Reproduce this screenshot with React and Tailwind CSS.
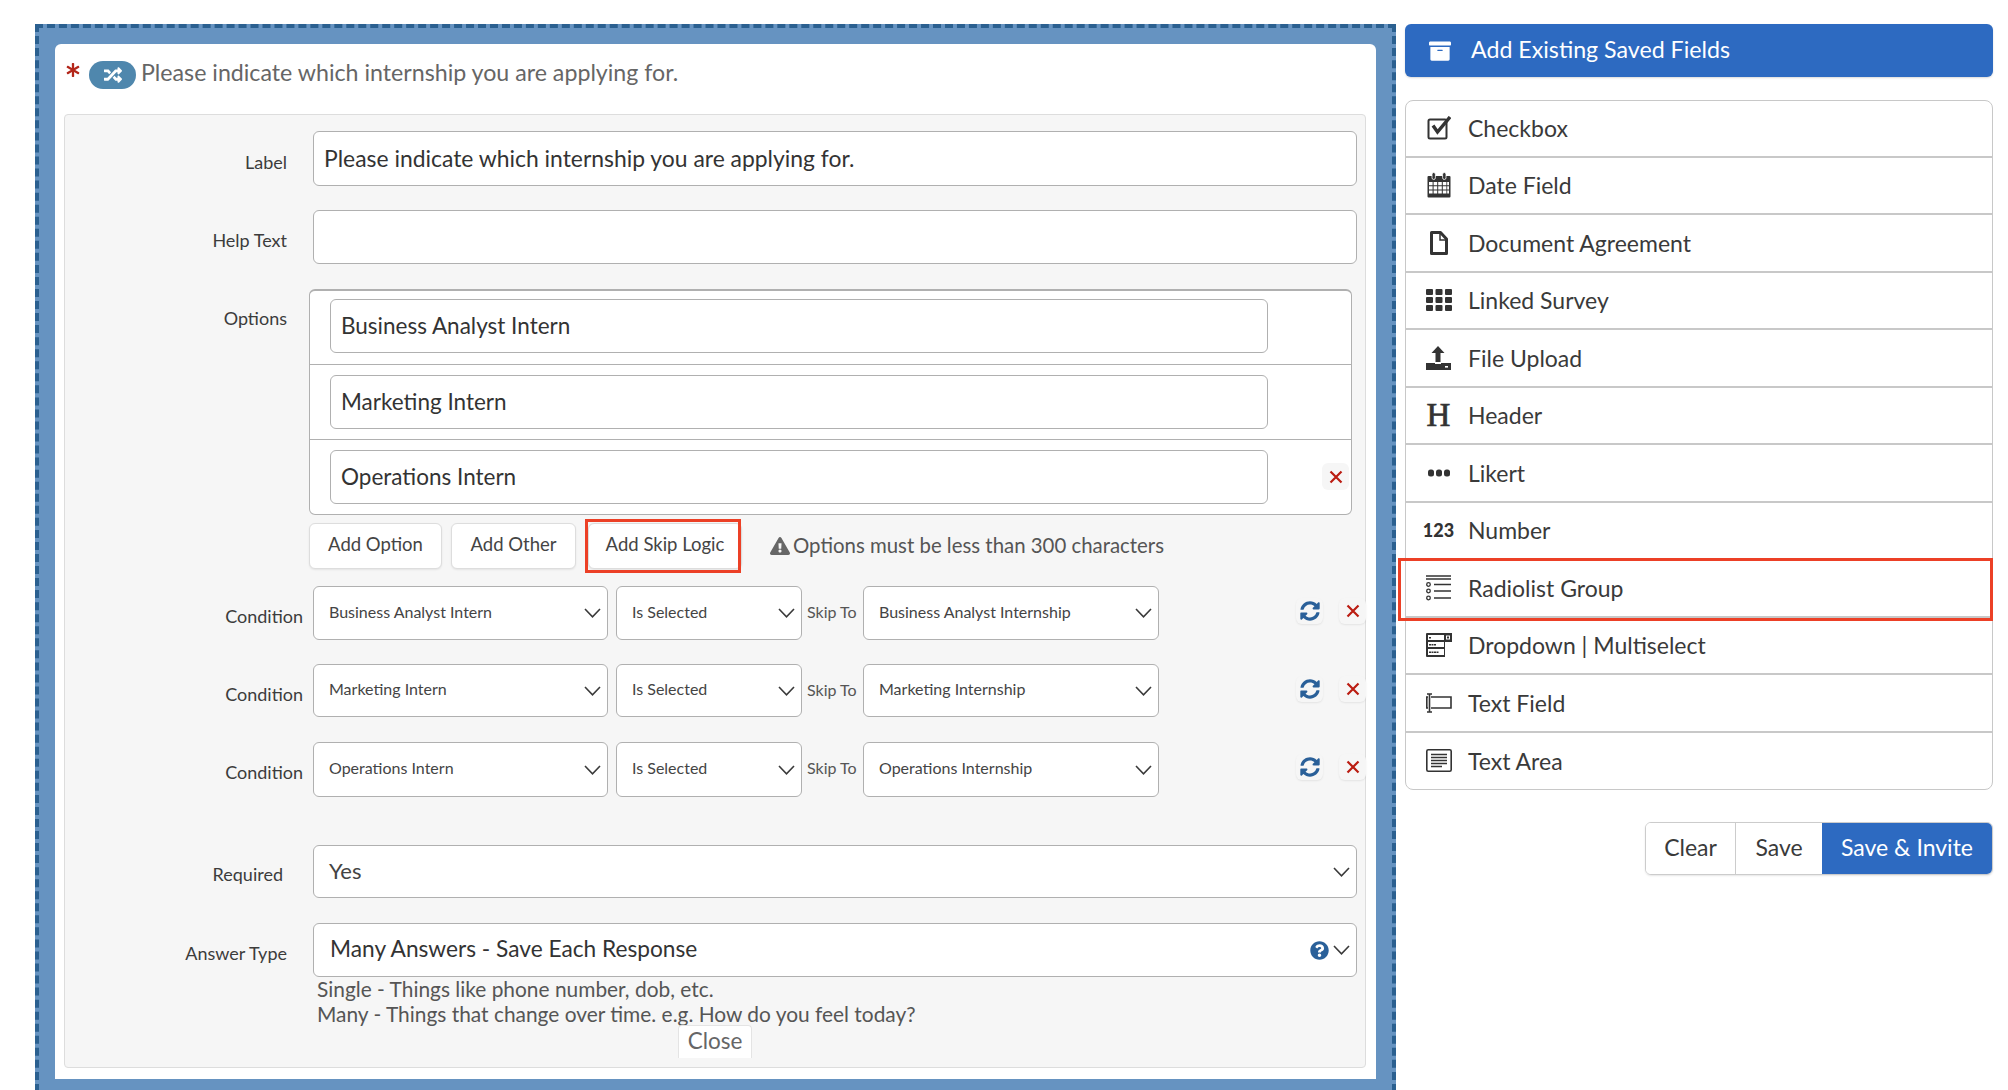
import React from "react";
import { FaRandom, FaAsterisk, FaSyncAlt, FaQuestionCircle, FaExclamationTriangle, FaArchive } from "react-icons/fa";

const font = "font-['Lato','Liberation_Sans',sans-serif]";

const Chevron = () => (
  <svg width="17" height="10" viewBox="0 0 17 10" className="shrink-0" fill="none" stroke="#3a3a3a" strokeWidth="1.6">
    <polyline points="1,1 8.5,8.8 16,1" />
  </svg>
);

const Cross = ({ size = 14 }) => (
  <svg width={size} height={size} viewBox="0 0 14 14" stroke="#bb1d12" strokeWidth="2.2" fill="none">
    <path d="M1.5 1.5 12.5 12.5M12.5 1.5 1.5 12.5" />
  </svg>
);

const Select = ({ value, className, textClass = "text-[16px]" }) => (
  <div className={`flex items-center justify-between rounded-md border border-[#b0b0b0] bg-white pl-[15px] pr-[6px] text-[#444] ${className}`}>
    <span className={`pb-[3px] ${textClass}`}>{value}</span>
    <Chevron />
  </div>
);

const FieldLabel = ({ children, className }) => (
  <div className={`shrink-0 text-right text-[18px] leading-6 text-[#3c3c3c] ${className}`}>{children}</div>
);

const CheckboxIcon = () => (
  <svg width="24" height="24" viewBox="0 0 24 24" fill="none" stroke="#333">
    <rect x="1.5" y="3.5" width="18" height="19" rx="1.5" strokeWidth="2" />
    <path d="M6 9.5 10.5 16 23 1" strokeWidth="3.4" />
  </svg>
);

const CalendarIcon = () => (
  <svg width="24" height="26" viewBox="0 0 24 26" fill="#333">
    <path d="M1.5 4h21a1 1 0 0 1 1 1v19.5a1 1 0 0 1-1 1h-21a1 1 0 0 1-1-1V5a1 1 0 0 1 1-1Z" />
    <rect x="5" y="0.5" width="3.4" height="7" rx="1.7" stroke="#fff" strokeWidth="0.8" />
    <rect x="15.6" y="0.5" width="3.4" height="7" rx="1.7" stroke="#fff" strokeWidth="0.8" />
    <path fill="#fff" d="M2 10h3.6v3.2H2zM6.6 10h3.6v3.2H6.6zM11.2 10h3.6v3.2h-3.6zM15.8 10h3.6v3.2h-3.6zM20.2 10H22v3.2h-1.8zM2 14.2h3.6v3.2H2zM6.6 14.2h3.6v3.2H6.6zM11.2 14.2h3.6v3.2h-3.6zM15.8 14.2h3.6v3.2h-3.6zM20.2 14.2H22v3.2h-1.8zM2 18.4h3.6v3.2H2zM6.6 18.4h3.6v3.2H6.6zM11.2 18.4h3.6v3.2h-3.6zM15.8 18.4h3.6v3.2h-3.6zM20.2 18.4H22v3.2h-1.8z" />
  </svg>
);

const FileIcon = () => (
  <svg width="18" height="24" viewBox="0 0 18 24" fill="none" stroke="#333" strokeWidth="3">
    <path d="M1.5 1.5h9l6 6.5v14.5h-15Z" strokeLinejoin="round" />
    <path d="M10 2v7h6.5" strokeWidth="1.5" />
  </svg>
);

const GridIcon = () => (
  <svg width="26" height="22" viewBox="0 0 26 22" fill="#333">
    {[0, 8, 16].map(y =>
      [0, 9.5, 19].map(x => <rect key={`${x}-${y}`} x={x} y={y} width="7" height="6" rx="1" />)
    )}
  </svg>
);

const UploadIcon = () => (
  <svg width="25" height="24" viewBox="0 0 25 24" fill="#333">
    <path d="M12 0 18.5 7H14.5V16H9.5V7H5.5Z" />
    <path d="M0 17h9v1h6v-1h10v7H0Z" />
    <rect x="19" y="20" width="3" height="1.6" fill="#fff" />
  </svg>
);

const DotsIcon = () => (
  <svg width="22" height="8" viewBox="0 0 22 8" fill="#333">
    <rect x="0" y="0.5" width="6" height="7" rx="2.5" />
    <rect x="8" y="0.5" width="6" height="7" rx="2.5" />
    <rect x="16" y="0.5" width="6" height="7" rx="2.5" />
  </svg>
);

const RadioListIcon = () => (
  <svg width="26" height="26" viewBox="0 0 26 26" fill="none" stroke="#333" strokeWidth="1.3">
    <path d="M0 1h25M0 4h25" />
    <circle cx="2.5" cy="9.5" r="1.8" />
    <circle cx="2.5" cy="16" r="1.8" />
    <circle cx="2.5" cy="23" r="1.8" />
    <path d="M8 9.5h17M8 16h17M8 23h17" strokeWidth="1.6" />
  </svg>
);

const DropdownIcon = () => (
  <svg width="26" height="24" viewBox="0 0 26 24" fill="#333">
    <path fillRule="evenodd" d="M1 0h25v9h-7v15H1a1 1 0 0 1-1-1V1a1 1 0 0 1 1-1Z" />
    <path fill="#fff" d="M2 2h16v5H2zM20 2.5h4v4h-4zM2 9h16v5H2zM2 16h16v6H2z" />
    <path d="M3 4h2v1.5H3zM3 11h2v1.5H3zM5.5 11h2v1.5h-2zM8 11h2v1.5H8zM3 18.5h2V20H3zM5.5 18.5h2V20h-2zM8 18.5h2V20H8zM10.5 18.5h2V20h-2zM21 3.5h2v2h-2z" />
  </svg>
);

const TextFieldIcon = () => (
  <svg width="26" height="20" viewBox="0 0 26 20" fill="none" stroke="#333" strokeWidth="1.6">
    <path d="M5 4h20v11H5M2 4H0.8v11H2" />
    <path d="M3.5 1v18M1 1h5M1 19h5" />
  </svg>
);

const TextAreaIcon = () => (
  <svg width="26" height="23" viewBox="0 0 26 23" fill="none" stroke="#333">
    <rect x="0.8" y="0.8" width="24.4" height="21.4" rx="1.5" strokeWidth="1.6" />
    <path d="M5 5.5h16M5 8.5h16M5 11.5h16M5 14.5h16M5 17.5h11" strokeWidth="1.5" />
  </svg>
);

const fieldTypes = [
  { name: "Checkbox", icon: <CheckboxIcon />, row: "h-[56.5px] border-b-2" },
  { name: "Date Field", icon: <CalendarIcon />, row: "h-[57.5px] border-b-2" },
  { name: "Document Agreement", icon: <FileIcon />, row: "h-[57.5px] border-b-2" },
  { name: "Linked Survey", icon: <GridIcon />, row: "h-[57.5px] border-b-2" },
  { name: "File Upload", icon: <UploadIcon />, row: "h-[57.5px] border-b-2" },
  { name: "Header", icon: <span className="font-['Liberation_Serif',serif] text-[33px] font-normal leading-none text-[#333] [-webkit-text-stroke:0.7px_#333]">H</span>, row: "h-[57.5px] border-b-2" },
  { name: "Likert", icon: <DotsIcon />, row: "h-[57.5px] border-b-2" },
  { name: "Number", icon: <span className="text-[18px] font-black leading-none text-[#333]">123</span>, row: "h-[57.5px] border-b-2" },
  { name: "Radiolist Group", icon: <RadioListIcon />, row: "h-[57.5px] border-b-2", highlighted: true },
  { name: "Dropdown | Multiselect", icon: <DropdownIcon />, row: "h-[57.5px] border-b-2" },
  { name: "Text Field", icon: <TextFieldIcon />, row: "h-[57.5px] border-b-2" },
  { name: "Text Area", icon: <TextAreaIcon />, row: "h-[56.5px]" },
];

const conditions = [
  { option: "Business Analyst Intern", target: "Business Analyst Internship", row: "mt-[17px] h-[54px]" },
  { option: "Marketing Intern", target: "Marketing Internship", row: "mt-[24px] h-[53px]" },
  { option: "Operations Intern", target: "Operations Internship", row: "mt-[25px] h-[55px]" },
];

const options = [
  { label: "Business Analyst Intern", row: "h-[74px] pt-[8px] border-b" },
  { label: "Marketing Intern", row: "h-[75px] pt-[10px] border-b" },
  { label: "Operations Intern", row: "h-[74px] pt-[10px]" },
];

const IconButton = ({ children }) => (
  <div className="flex h-[26px] w-[27px] items-center justify-center rounded-md bg-[#f6f6f6] shadow-[0_1px_2px_rgba(0,0,0,0.08)]">
    {children}
  </div>
);

const SmallButton = ({ children, className }) => (
  <button className={`h-[46px] rounded-md border border-[#ddd] bg-white pb-[2px] text-[18.5px] text-[#444] shadow-[0_1px_2px_rgba(0,0,0,0.08)] ${className}`}>
    {children}
  </button>
);

export default function App() {
  return (
    <div className={`flex h-[1090px] overflow-hidden bg-white pl-[35px] pt-6 ${font}`}>
      {/* editor */}
      <div className="h-[1080px] w-[1361px] shrink-0 border-4 border-dashed border-[#2b6090] bg-[#6693c1] p-4">
        <div className="h-[1035px] rounded-t-md bg-white pt-[17px]">
          <div className="flex h-[53px] items-start pl-[11px] text-[#666]">
            <FaAsterisk className="mt-[2px] text-[14px] text-[#b3261a]" />
            <div className="ml-[9px] flex h-7 w-[47px] items-center justify-center rounded-full bg-[#4f87ad] text-white">
              <FaRandom className="text-[18px]" />
            </div>
            <span className="ml-[5px] -mt-[3px] text-[23.2px] leading-7">Please indicate which internship you are applying for.</span>
          </div>

          <div className="ml-[9px] mr-[10px] h-[954px] rounded border border-[#ddd] bg-[#f6f6f6]">
            <div className="mt-[16px] flex h-[55px]">
              <FieldLabel className="mt-[19px] w-[222px]">Label</FieldLabel>
              <input readOnly value="Please indicate which internship you are applying for." className="ml-[26px] h-full w-[1044px] rounded-md border border-[#b0b0b0] bg-white pb-[2px] pl-[10px] text-[22.9px] text-[#333]" />
            </div>
            <div className="mt-6 flex h-[54px]">
              <FieldLabel className="mt-[18px] w-[222px]">Help Text</FieldLabel>
              <input readOnly className="ml-[26px] h-full w-[1044px] rounded-md border border-[#b0b0b0] bg-white" />
            </div>

            <div className="mt-[25px] flex">
              <FieldLabel className="mt-[17px] w-[222px]">Options</FieldLabel>
              <div className="ml-[22px] h-[226px] w-[1043px] rounded-md border border-t-2 border-[#b0b0b0] bg-white">
                {options.map((option, i) => (
                  <div key={option.label} className={`flex items-start border-[#b0b0b0] pl-5 ${option.row}`}>
                    <input readOnly value={option.label} className="h-[54px] w-[938px] rounded-md border border-[#b0b0b0] bg-white pb-[2px] pl-[10px] text-[22.5px] text-[#333]" />
                    {i === 2 && (
                      <div className="ml-[54px] mt-[13px] flex h-[27px] w-[27px] items-center justify-center rounded-md bg-[#f6f6f6]">
                        <Cross />
                      </div>
                    )}
                  </div>
                ))}
              </div>
            </div>

            <div className="mt-2 flex items-center pl-[244px]">
              <SmallButton className="w-[133px]">Add Option</SmallButton>
              <SmallButton className="ml-[9px] w-[125px]">Add Other</SmallButton>
              <div className="relative ml-[12px]">
                <SmallButton className="w-[154px]">Add Skip Logic</SmallButton>
                <div className="absolute -left-[3px] -top-1 h-[54px] w-[156px] border-[3px] border-[#ec4026]" />
              </div>
              <FaExclamationTriangle className="ml-[28px] text-[20px] text-[#666]" />
              <span className="ml-[3px] pb-[2px] text-[20.4px] text-[#555]">Options must be less than 300 characters</span>
            </div>

            {conditions.map(c => (
              <div key={c.option} className={`flex ${c.row}`}>
                <FieldLabel className="mt-[18px] w-[238px]">Condition</FieldLabel>
                <Select value={c.option} className="ml-[10px] h-full w-[295px]" />
                <Select value="Is Selected" className="ml-[8px] h-full w-[186px]" />
                <span className="ml-[5px] mt-[14px] w-[56px] text-[16px] text-[#555]">Skip To</span>
                <Select value={c.target} className="h-full w-[296px]" />
                <div className="-mr-px ml-auto mt-3 flex gap-4">
                  <IconButton><FaSyncAlt className="text-[20px] text-[#2a6099]" /></IconButton>
                  <IconButton><Cross /></IconButton>
                </div>
              </div>
            ))}

            <div className="mt-[48px] flex h-[53px]">
              <FieldLabel className="mr-[4px] mt-[17px] w-[218px] text-[18.3px]">Required</FieldLabel>
              <Select value="Yes" textClass="text-[22px]" className="ml-[26px] h-full w-[1044px]" />
            </div>
            <div className="mt-[25px] flex h-[54px]">
              <FieldLabel className="mt-[18px] w-[222px]">Answer Type</FieldLabel>
              <div className="ml-[26px] flex h-full w-[1044px] items-center rounded-md border border-[#b0b0b0] bg-white pl-4 pr-[6px] text-[#333]">
                <span className="pb-[2px] text-[22.7px]">Many Answers - Save Each Response</span>
                <FaQuestionCircle className="ml-auto mr-1 text-[19px] text-[#2a6099]" />
                <Chevron />
              </div>
            </div>
            <div className="-mt-px ml-[252px] text-[20.9px] leading-[25px] text-[#555]">
              <div>Single - Things like phone number, dob, etc.</div>
              <div>Many - Things that change over time. e.g. How do you feel today?</div>
            </div>
            <div className="-mt-[1px] flex justify-center">
              <button className="relative h-[33px] w-[74px] rounded-t border border-b-0 border-[#e4e4e4] bg-white pb-[1px] text-[22.5px] leading-none text-[#666]">Close</button>
            </div>
          </div>
        </div>
      </div>

      {/* field picker */}
      <div className="ml-[9px] w-[588px] shrink-0">
        <div className="flex h-[53px] items-center rounded-md bg-[#2d6ac1] pb-[2px] pl-6 text-[23.2px] text-white shadow-[0_1px_2px_rgba(0,0,0,0.15)]">
          <FaArchive className="mt-[2px] text-[22px]" />
          <span className="ml-[20px]">Add Existing Saved Fields</span>
        </div>

        <div className="mt-[23px] rounded-lg border border-[#c8c8c8] bg-white">
          {fieldTypes.map(field => (
            <div key={field.name} className={`relative flex items-center border-[#c8c8c8] text-[23px] text-[#3a3a3a] ${field.row}`}>
              <div className="flex w-[61px] shrink-0 items-center justify-center pl-[4px]">{field.icon}</div>
              <span className="ml-px">{field.name}</span>
              {field.highlighted && (
                <div className="absolute -left-[8px] -right-px -top-[2px] h-[63px] border-[3px] border-[#ec4026]" />
              )}
            </div>
          ))}
        </div>

        <div className="mt-[32px] flex justify-end">
          <div className="flex h-[53px] overflow-hidden rounded-md border border-[#ccc] text-[23px] shadow-[0_1px_2px_rgba(0,0,0,0.1)]">
            <button className="w-[90px] border-r border-[#ccc] bg-white pb-[2px] text-[#3a3a3a]">Clear</button>
            <button className="w-[86px] bg-white pb-[2px] text-[#3a3a3a]">Save</button>
            <button className="w-[170px] bg-[#2d6ac1] pb-[2px] text-white">Save &amp; Invite</button>
          </div>
        </div>
      </div>
    </div>
  );
}
